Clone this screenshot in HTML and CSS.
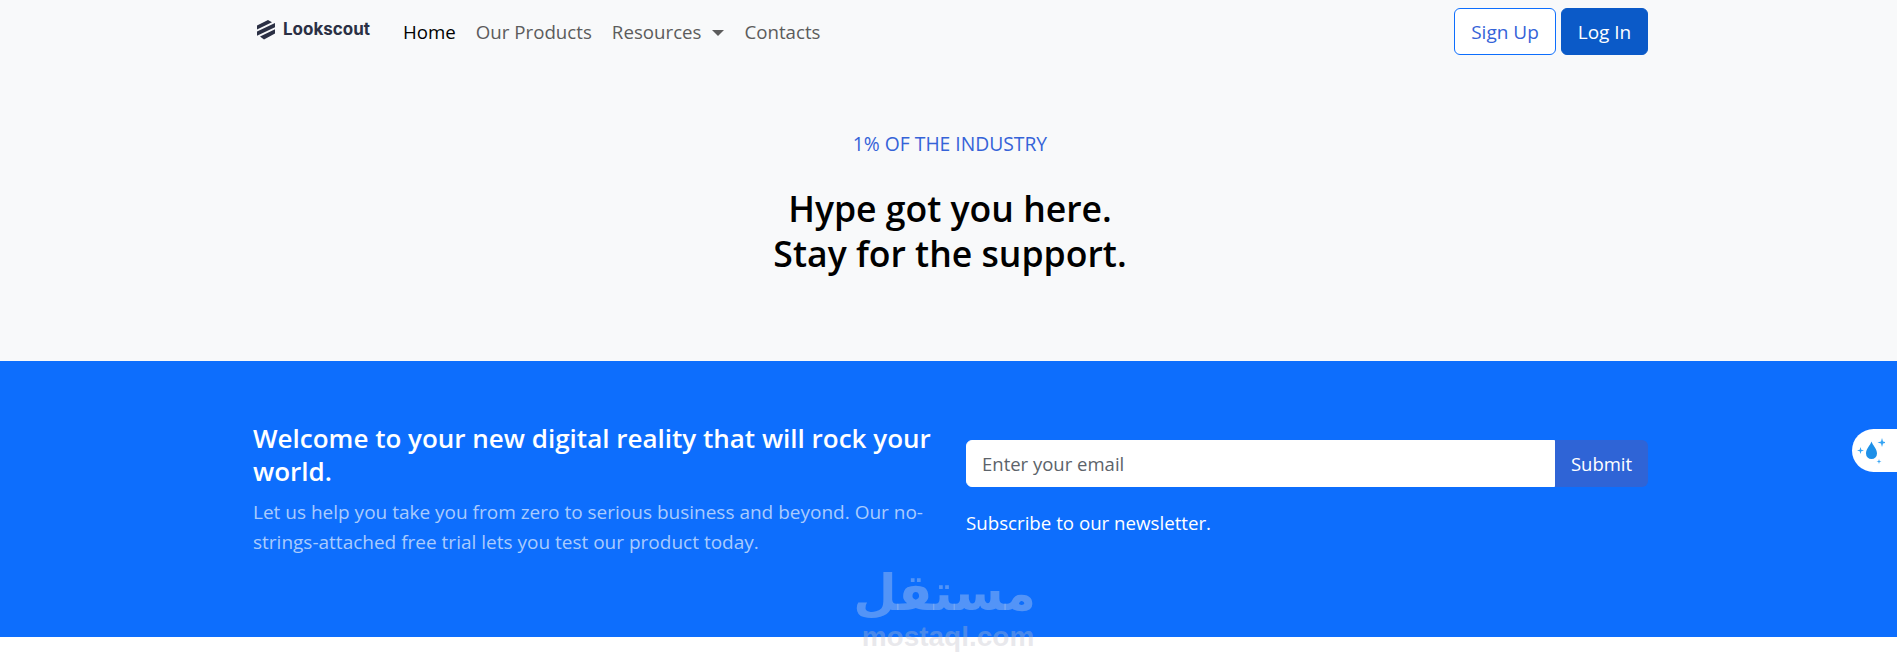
FILE: index.html
```html
<!DOCTYPE html>
<html lang="en">
<head>
    <meta charset="UTF-8">
    <meta name="viewport" content="width=device-width, initial-scale=1.0">
    <title>Lookscout</title>
    <link rel="stylesheet" href="styles.css">
</head>
<body>

<div class="top">
    <nav class="navbar">
        <a class="brand" href="#">
            <svg class="brand-icon" viewBox="0 0 20 20" width="20" height="20">
                <path d="M1 5.500 12 0l4 2.200L1 9.600zM1 11.600 19 3v4.200L1 15.800zM4 16.400 19 9.200v4.400L8 19.600z" fill="#2b3044"/>
            </svg>
            <span>Lookscout</span>
        </a>
        <ul class="nav-links">
            <li><a class="active" href="#">Home</a></li>
            <li><a href="#">Our Products</a></li>
            <li><a class="dropdown" href="#">Resources</a></li>
            <li><a href="#">Contacts</a></li>
        </ul>
        <div class="nav-buttons">
            <button class="btn-signup">Sign Up</button>
            <button class="btn-login">Log In</button>
        </div>
    </nav>

    <section class="hero">
        <p class="kicker">1% OF THE INDUSTRY</p>
        <h1>Hype got you here.<br>Stay for the support.</h1>
    </section>
</div>

<section class="cta">
    <div class="cta-inner">
        <div class="cta-text">
            <h2>Welcome to your new digital reality that will rock your world.</h2>
            <p>Let us help you take you from zero to serious business and beyond. Our no-strings-attached free trial lets you test our product today.</p>
        </div>
        <div class="cta-form">
            <div class="input-group">
                <input type="text" placeholder="Enter your email">
                <button>Submit</button>
            </div>
            <p>Subscribe to our newsletter.</p>
        </div>
    </div>
</section>

<div class="float-tab">
    <svg viewBox="0 0 30 30" width="30" height="30">
        <path d="M16.500 5.500c-1 3.500-5.500 7-5.500 12a5.500 5.500 0 0 0 11 0c0-5-4.500-8.500-5.500-12z" fill="#1e90e8"/>
        <path d="M27 2l1 3.500 3.500 1-3.500 1-1 3.500-1-3.500-3.500-1 3.500-1zM5.500 11l.8 2.700 2.700.8-2.700.8-.8 2.700-.8-2.700-2.700-.8 2.700-.8zM24 23l.6 1.900 1.900.6-1.900.6-.6 1.900-.6-1.900-1.900-.6 1.900-.6z" fill="#35a4f4"/>
    </svg>
</div>

<div class="watermark">
    <div class="wm-arabic" lang="ar" dir="rtl">مستقل</div>
    <div class="wm-latin">mostaql.com</div>
</div>

</body>
</html>
```

FILE: styles.css
```css
* {
    box-sizing: border-box;
}
body {
    margin: 0;
    background-color: white;
    font-family: "Open Sans", "Noto Sans", Arial, sans-serif;
    font-size: 18.7px;
    line-height: 1.5;
    overflow: hidden;
}
.top {
    background-color: #f8f9fa;
    height: 361px;
}
.navbar {
    display: flex;
    align-items: center;
    width: 1395px;
    margin-left: 253px;
    padding-top: 8px;
}
.brand {
    display: flex;
    align-items: center;
    gap: 7px;
    width: 150px;
    padding-left: 3px;
    margin-top: -4px;
    color: #2b3044;
    font-family: Inter, sans-serif;
    font-size: 17px;
    font-weight: 700;
    text-decoration: none;
}
.nav-links {
    display: flex;
    gap: 20px;
    list-style: none;
    margin: 2px 0 0;
    padding: 0;
}
.nav-links a {
    color: #5c5c5c;
    text-decoration: none;
}
.nav-links a.active {
    color: #000;
}
.dropdown::after {
    content: "";
    display: inline-block;
    margin-left: 11px;
    vertical-align: 3px;
    border-top: 6px solid #5c5c5c;
    border-left: 6px solid transparent;
    border-right: 6px solid transparent;
}
.nav-buttons {
    display: flex;
    gap: 5px;
    margin-left: auto;
}
.nav-buttons button {
    height: 47px;
    border-radius: 6px;
    font-family: inherit;
    font-size: 19px;
}
.btn-signup {
    width: 102px;
    padding: 0;
    background-color: white;
    border: 1px solid #0d6efd;
    color: #3563d8;
}
.btn-login {
    width: 87px;
    padding: 0;
    background-color: #0b5ac8;
    border: 1px solid #0b5ac8;
    color: white;
}
.hero {
    padding-left: 3px;
    text-align: center;
}
.kicker {
    margin: 75px 0 0;
    color: #3563d8;
    font-size: 19.3px;
}
.hero h1 {
    margin: 27px 0 0;
    color: #000;
    font-size: 35.6px;
    font-weight: 600;
    line-height: 45px;
}
.cta {
    background-color: #0d6efd;
    height: 276px;
}
.cta-inner {
    display: flex;
    width: 1395px;
    margin-left: 253px;
    padding-top: 61px;
}
.cta-text {
    width: 713px;
}
.cta-text h2 {
    margin: 0;
    width: 690px;
    color: white;
    font-size: 26px;
    font-weight: 600;
    line-height: 33px;
}
.cta-text p {
    margin: 9px 0 0;
    width: 690px;
    color: #a9cbfd;
    font-size: 19px;
    line-height: 30px;
}
.cta-form {
    flex: 1;
    padding-top: 18px;
}
.input-group {
    display: flex;
    height: 47px;
}
.input-group input {
    flex: 1;
    min-width: 0;
    padding: 0 15px;
    border: 1px solid white;
    border-radius: 6px 0 0 6px;
    font-family: inherit;
    font-size: 18.5px;
}
.input-group input::placeholder {
    color: #5c636a;
}
.input-group button {
    width: 93px;
    padding: 0;
    background-color: #2f64d6;
    border: none;
    border-radius: 0 6px 6px 0;
    color: white;
    font-family: inherit;
    font-size: 18.5px;
}
.cta-form p {
    margin: 22px 0 0;
    color: white;
    font-size: 18.7px;
}
.float-tab {
    position: absolute;
    top: 429px;
    right: 0;
    width: 45px;
    height: 43px;
    display: flex;
    align-items: center;
    padding-left: 3px;
    background-color: white;
    border-radius: 22px 0 0 22px;
}
.watermark {
    position: absolute;
    top: 561px;
    left: 860px;
    width: 176px;
    text-align: center;
    pointer-events: none;
}
.wm-arabic {
    color: rgba(215, 222, 235, 0.35);
    font-family: "DejaVu Sans", sans-serif;
    font-size: 50px;
    font-weight: 700;
    line-height: 64px;
}
.wm-latin {
    color: rgba(190, 190, 200, 0.35);
    font-family: "Liberation Sans", Arial, sans-serif;
    font-size: 28px;
    font-weight: 700;
    line-height: 24px;
}
```
